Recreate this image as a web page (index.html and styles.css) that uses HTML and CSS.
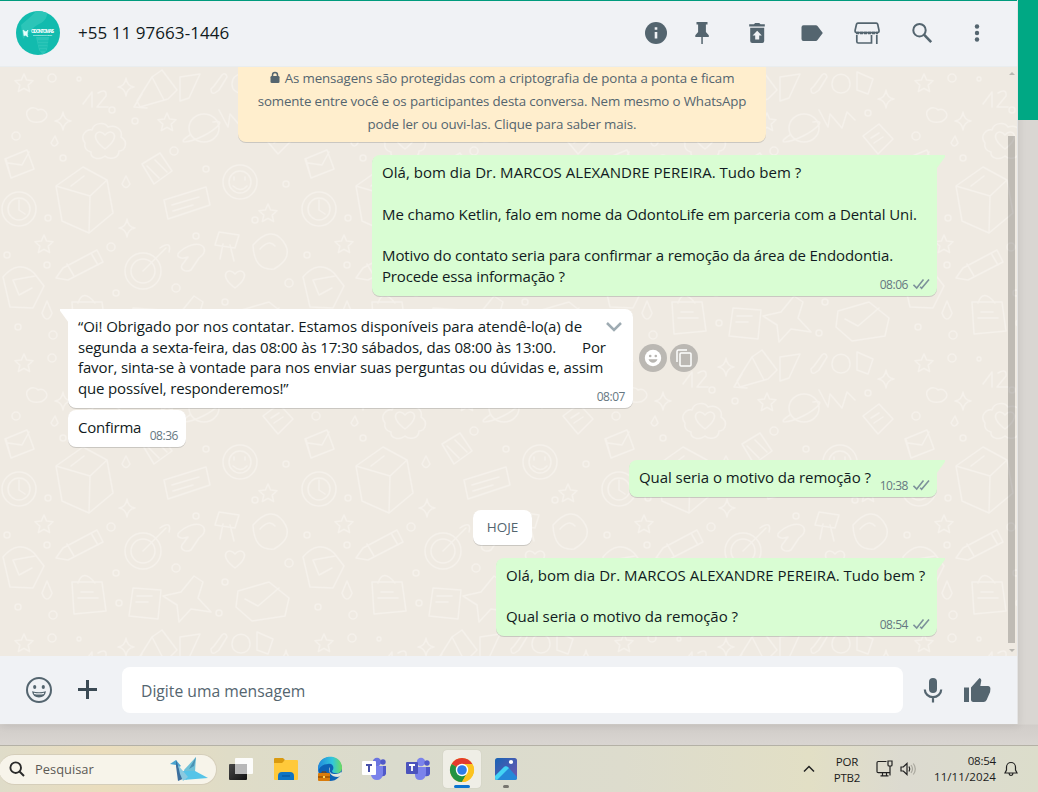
FILE: index.html
```html
<!DOCTYPE html>
<html lang="pt-BR">
<head>
	<meta charset="UTF-8">
	<title>WhatsApp</title>
	<link rel="stylesheet" href="styles.css">
</head>
<body>
	<div class="desktop">
		<div class="app">
			<div class="header">
				<svg class="avatar" width="44" height="44" viewBox="0 0 44 44">
					<defs><clipPath id="round"><circle cx="22" cy="22" r="22"/></clipPath></defs>
					<g clip-path="url(#round)">
						<rect width="44" height="44" fill="#12bbae"/>
						<path d="M5 14C12 8 17 4 20 0h11c1 5-2 11-8 13-6 3-10 9-16 15z" fill="#2cc5b8"/>
						<path d="M20 26h13l-2 13-4 5-4-5z" fill="#2cc5b8"/>
						<path d="M22 30h11M22 33h10M23 36h8M24 39h6" stroke="#12bbae"/>
					</g>
					<path d="M7 19l3 2 2-2-1 4 1 3-3-2-1 1zM10 20l2 4" fill="#e9fffc" stroke="#e9fffc" stroke-width=".5"/>
					<text class="logo-text" x="15" y="22.4" textLength="23">ODONTOMAIS</text>
					<text class="logo-sub" x="17" y="25.4" textLength="19">Excelência em Clínica</text>
				</svg>
				<div class="name">+55 11 97663-1446</div>
				<div class="tools">
					<svg class="info" width="24" height="24" viewBox="0 0 24 24"><circle cx="12" cy="12" r="11" fill="#54656f"/><path d="M12 11v6.500M12 6.200v2.600" stroke="#f0f2f5" stroke-width="2.600"/></svg>
					<svg width="24" height="24" viewBox="0 0 24 24" fill="#54656f"><path d="M6.500 1h11v2.600h-1.600V11l2.900 3.200V16h-6v7h-1.500v-7H5.300v-1.800L8.100 11V3.600H6.500z"/></svg>
					<svg width="24" height="24" viewBox="0 0 24 24" fill="#54656f"><path d="M4.200 3.300h4.600L10.200 2h4l1.400 1.300h4.200v2.200H4.200zM5.200 6.800h14V20a2 2 0 0 1-2 2h-10a2 2 0 0 1-2-2z"/><path d="M12.200 9.800l4.600 4.700h-2.600v4h-4v-4H7.600z" fill="#f0f2f5"/></svg>
					<svg width="24" height="24" viewBox="0 0 24 24"><path d="M3.500 4.200h12.300a2 2 0 0 1 1.700.8l5.300 7-5.300 7a2 2 0 0 1-1.700.9H3.500a2 2 0 0 1-2-2V6.200a2 2 0 0 1 2-2z" fill="#54656f"/></svg>
					<svg class="store" width="26" height="24" viewBox="0 0 26 24" fill="none" stroke="#54656f" stroke-width="1.700"><path d="M4 2.200h18.200a1.500 1.500 0 0 1 1.500 1.100L25 9.300v.9a1.500 1.500 0 0 1-1.500 1.500H2.600a1.500 1.500 0 0 1-1.500-1.500v-.9l1.400-6a1.500 1.500 0 0 1 1.500-1.100z"/><path d="M2 12h22" stroke-dasharray="3 1" stroke-width="2.500"/><path d="M2.800 14v6.500a1.500 1.500 0 0 0 1.500 1.500h13.200V14M22.800 14v9"/></svg>
					<svg width="24" height="24" viewBox="0 0 24 24" fill="none" stroke="#54656f"><circle cx="9.500" cy="9.200" r="6.200" stroke-width="2"/><path d="M14 13.700l7.200 7.500" stroke-width="2.600"/></svg>
					<svg width="24" height="24" viewBox="0 0 24 24" fill="#54656f"><circle cx="12" cy="5.500" r="2.200"/><circle cx="12" cy="12" r="2.200"/><circle cx="12" cy="18.500" r="2.200"/></svg>
				</div>
			</div>

			<div class="chat">
				<svg class="wallpaper" width="1017" height="589">
					<defs>
						<g id="star"><path d="M0-9l2.600 6 6.400.7-4.800 4.400 1.400 6.400L0 5.300l-5.600 3.200 1.400-6.400L-9-2.300l6.400-.7z"/></g>
						<g id="spark"><path d="M0-9Q1-1 8 0 1 1 0 9-1 1-8 0-1-1 0-9z"/></g>
						<g id="heart"><path d="M0 8C-18-5-6-14 0-6 6-14 18-5 0 8z"/></g>
						<pattern id="doodle" width="300" height="280" patternUnits="userSpaceOnUse">
							<g fill="none" stroke="#f5f1eb" stroke-width="1.500" stroke-linejoin="round" stroke-linecap="round">
								<use href="#star" x="24" y="16"/>
								<use href="#star" x="167" y="55"/>
								<use href="#star" x="44" y="177"/>
								<use href="#star" x="268" y="146"/>
								<use href="#spark" x="63" y="54"/>
								<use href="#spark" x="126" y="20"/>
								<use href="#spark" x="286" y="32"/>
								<use href="#spark" x="127" y="161"/>
								<use href="#heart" x="105" y="74"/>
								<use href="#heart" x="235" y="213"/>
								<path d="M85 76c-6-8 2-14 7-13 2-8 13-8 16-3 8-3 15 3 13 10 8 5 4 14-2 14 0 8-10 9-14 5-6 5-15 2-14-4-5-1-7-5-6-9z"/>
								<path d="M83 37l9-12v15M98 26q9-5 8 3l-9 11h11"/>
								<path d="M137 34l15-24 10-7 15 20-9 9-28 8zM152 10l12 23M142 27l-8 13 13 1"/>
								<ellipse cx="204" cy="61" rx="15" ry="14"/><path d="M190 68c-16 10-1 8 13 1s24-17 10-14"/>
								<path d="M180 10l20-3-11 24-9 3zM214 19l8-11q4-3 5 2l-8 13q-8 7-8-1z"/>
								<path d="M28 51c-5-9 6-13 10-8 6-3 12 5 7 9-4 5-15 4-17-1z"/>
								<path d="M5 92l22-9 7 19-23 9zM8 96l14 2 7-13M6 92l5 19"/>
								<path d="M142 97l18-11 12 18-18 13zM147 99l12 12M155 93l12 12"/>
								<path d="M56 119l27-19 24 13 6 33-24 20-27-12zM56 119l34 10 17-16M90 129l-1 37M71 119l13-10"/>
								<circle cx="19" cy="142" r="17"/><circle cx="19" cy="142" r="11"/><path d="M19 133v10l6 4"/>
								<path d="M164 133l42-13 4 18-42 14zM172 138l27-8M173 144l20-6"/>
								<circle cx="240" cy="115" r="17"/><circle cx="240" cy="115" r="11"/><path d="M234 110v3M245 110v3M233 119q8 7 14 0"/>
								<path d="M263 69l16-12 14 15-15 15zM271 71l8-5M274 76l9-6"/>
								<path d="M63 201l34-18 6 12-35 18-12-2zM67 197l7 12M91 186l7 12"/>
								<circle cx="143" cy="204" r="18"/><circle cx="143" cy="204" r="12"/><path d="M143 204l23-23M160 181q12-8 9 4"/>
								<path d="M182 183c18-13 30-1 17 8l-8 12c-6 3-11-1-9-5l6-8c-8 3-15-1-6-7z"/>
								<path d="M3 210q15-18 31-4l10 13-11 22-23-1zM13 213l6 15 13-7M13 213l22-4"/>
								<path d="M72 235h30l4 29-32 3zM78 236q5-15 17 0M78 251h20M81 245h12"/>
								<path d="M133 241l28 2-3 29-29-3zM137 249h15M136 255h12"/>
								<path d="M194 229l9 6-5 16 13 14-20-3-12 13-2-17-14-9 18-4z"/>
								<path d="M238 244l31-9 20 16-4 18-33 5-16-14zM245 252l13 7 21-18"/>
								<path d="M219 165l20 3-4 13-20-3zM223 177l-3 15M230 178l4 16"/>
								<path d="M253 178q18-20 30-4t-9 28q-20 2-21-24zM260 182q9-10 15-3"/>
								<path d="M219 43l9 17 2-13 12 14 5-16 8 8"/>
								<path d="M232 17c0-13 18-13 18 0 0 12-18 12-18 0zM257 5l16 7-5 15-11-4z"/>
								<path d="M42 246l5-12 5 12q-2 6-5 6t-5-6zM122 117l4-8 4 8q-4 7-8 0zM51 76l4-7 3 7q-4 6-7 0z"/>
								<circle cx="52" cy="11" r="4"/><circle cx="112" cy="43" r="3"/><circle cx="63" cy="91" r="3"/>
								<circle cx="16" cy="69" r="4"/><circle cx="135" cy="54" r="3"/><circle cx="174" cy="84" r="4"/>
								<circle cx="268" cy="46" r="3"/><circle cx="206" cy="102" r="3"/><circle cx="286" cy="117" r="3"/>
								<circle cx="48" cy="151" r="3"/><circle cx="111" cy="180" r="4"/><circle cx="196" cy="169" r="3"/>
								<circle cx="47" cy="198" r="3"/><circle cx="116" cy="226" r="3"/><circle cx="176" cy="221" r="4"/>
								<circle cx="53" cy="268" r="4"/><circle cx="119" cy="256" r="3"/><circle cx="225" cy="235" r="3"/>
								<circle cx="289" cy="216" r="4"/><circle cx="219" cy="266" r="3"/><circle cx="7" cy="188" r="3"/>
								<circle cx="18" cy="260" r="3"/><circle cx="255" cy="153" r="3"/><circle cx="79" cy="12" r="2"/>
							</g>
						</pattern>
						<g id="ticks"><path d="M.5 6.800l3.200 3.200L10.500 1.500M7.200 8.800l1.400 1.400L16 1.500" fill="none" stroke="#7d919a" stroke-width="1.600"/></g>
					</defs>
					<rect width="1017" height="589" fill="url(#doodle)"/>
				</svg>

				<div class="notice">
					<p class="n1"><svg width="10" height="13" viewBox="0 0 10 13"><path d="M2.500 6V4a2.500 2.500 0 0 1 5 0v2" fill="none" stroke="#54656f" stroke-width="1.500"/><rect x=".5" y="5" width="9" height="7" rx="1.300" fill="#54656f"/></svg><span>As mensagens são protegidas com a criptografia de ponta a ponta e ficam</span></p>
					<p class="n2">somente entre você e os participantes desta conversa. Nem mesmo o WhatsApp</p>
					<p class="n3">pode ler ou ouvi-las. Clique para saber mais.</p>
				</div>

				<div class="row out first">
					<div class="bubble sent tail w565">
						<div class="text">
							<p class="t1">Olá, bom dia Dr. MARCOS ALEXANDRE PEREIRA. Tudo bem ?</p>
							<p>&nbsp;</p>
							<p class="t2">Me chamo Ketlin, falo em nome da OdontoLife em parceria com a Dental Uni.</p>
							<p>&nbsp;</p>
							<p class="t3">Motivo do contato seria para confirmar a remoção da área de Endodontia.</p>
							<p class="t4">Procede essa informação ?</p>
						</div>
						<div class="meta">08:06 <svg width="17" height="12"><use href="#ticks"/></svg></div>
					</div>
				</div>

				<div class="row in second">
					<div class="bubble tail w565">
						<div class="text">
							<p class="t5">“Oi! Obrigado por nos contatar. Estamos disponíveis para atendê-lo(a) de</p>
							<p class="t6">segunda a sexta-feira, das 08:00 às 17:30 sábados, das 08:00 às 13:00.<span class="por">Por</span></p>
							<p class="t7">favor, sinta-se à vontade para nos enviar suas perguntas ou dúvidas e, assim</p>
							<p class="t8">que possível, responderemos!”</p>
						</div>
						<svg class="arrow" width="18" height="12" viewBox="0 0 18 12"><path d="M2 2l7 7 7-7" fill="none" stroke="#9eabb2" stroke-width="2.500"/></svg>
						<div class="meta">08:07</div>
					</div>
					<div class="round">
						<svg width="20" height="20" viewBox="0 0 20 20"><circle cx="10" cy="10" r="8.200" fill="#fff"/><circle cx="7.200" cy="8" r="1.300" fill="#b7b5b1"/><circle cx="12.800" cy="8" r="1.300" fill="#b7b5b1"/><path d="M5.500 11.300h9q-1.300 3.400-4.500 3.400t-4.500-3.400z" fill="#b7b5b1"/></svg>
					</div>
					<div class="round">
						<svg width="20" height="20" viewBox="0 0 20 20" fill="none" stroke="#fff" stroke-width="1.500"><path d="M3 14V3.500A1.500 1.500 0 0 1 4.500 2H13"/><rect x="6" y="5" width="11" height="13" rx="1"/></svg>
					</div>
				</div>

				<div class="row in third">
					<div class="bubble w118">
						<div class="text"><p class="t9">Confirma</p></div>
						<div class="meta">08:36</div>
					</div>
				</div>

				<div class="row out fourth">
					<div class="bubble sent tail w308">
						<div class="text"><p class="t10">Qual seria o motivo da remoção ?</p></div>
						<div class="meta">10:38 <svg width="17" height="12"><use href="#ticks"/></svg></div>
					</div>
				</div>

				<div class="day">HOJE</div>

				<div class="row out last">
					<div class="bubble sent tail w441">
						<div class="text">
							<p class="t1">Olá, bom dia Dr. MARCOS ALEXANDRE PEREIRA. Tudo bem ?</p>
							<p>&nbsp;</p>
							<p class="t10">Qual seria o motivo da remoção ?</p>
						</div>
						<div class="meta">08:54 <svg width="17" height="12"><use href="#ticks"/></svg></div>
					</div>
				</div>

				<div class="scroll">
					<span class="up"></span>
					<span class="thumb"></span>
					<span class="down"></span>
				</div>
			</div>

			<div class="footer">
				<svg class="smile" width="28" height="28" viewBox="0 0 28 28"><circle cx="14" cy="14" r="12" fill="none" stroke="#54656f" stroke-width="2"/><ellipse cx="9.700" cy="11" rx="1.600" ry="2" fill="#54656f"/><ellipse cx="18.300" cy="11" rx="1.600" ry="2" fill="#54656f"/><path d="M7 15.300q7 2 14 0-1 6.200-7 6.200t-7-6.200z" fill="#54656f"/><path d="M9 17.300q5 1.200 10 0" stroke="#f0f2f5" stroke-width="1.300" fill="none"/></svg>
				<svg class="plus" width="20" height="20" viewBox="0 0 20 20"><path d="M9.500 0v19M0 9.500h19" stroke="#3b4a54" stroke-width="3"/></svg>
				<div class="input"><span>Digite uma mensagem</span></div>
				<svg class="mic" width="20" height="26" viewBox="0 0 20 26"><rect x="6" y="1" width="8" height="15" rx="4" fill="#54656f"/><path d="M1.800 12.500a8.200 7.600 0 0 0 16.400 0M10 20v5.500" fill="none" stroke="#54656f" stroke-width="2.200"/></svg>
				<svg class="thumbup" width="28" height="26" viewBox="0 0 28 26" fill="#54656f"><path d="M1 10.500h5V25H1zM8 10.500L16.500 1q2 .8 1.800 2.500L17.300 9H25q2.500.3 2.400 3l-.3 3-3.500 8q-1 2-3 2H10q-2-.3-2-2z"/></svg>
			</div>
		</div>
		<div class="side"></div>
	</div>

	<div class="taskbar">
		<div class="search">
			<svg width="16" height="16" viewBox="0 0 16 16" fill="none" stroke="#2a2a2a" stroke-width="1.900"><circle cx="6.700" cy="6.700" r="5.300"/><path d="M10.500 10.500l4.500 4.500"/></svg>
			<span>Pesquisar</span>
			<svg class="bird" width="40" height="26" viewBox="0 0 40 26"><path d="M1 8l6-4 5 6-4 2-1-3z" fill="#4aa4cf"/><path d="M7 4l3 8 6 10-7 3-2-15z" fill="#3c6f9e"/><path d="M15 14L27 1l-1 15-9 8z" fill="#6fc1d8"/><path d="M20 13l5-3 2-9z" fill="#4b91b3"/><path d="M14 15l12 0 13 7-25 2z" fill="#56c4e8"/><path d="M9 9l10 12-5 4-3-7z" fill="#8ac9e0"/></svg>
		</div>
		<div class="icons">
			<svg width="26" height="26" viewBox="0 0 26 26"><defs><linearGradient id="gd" x2="1" y2="1"><stop stop-color="#484848"/><stop offset="1" stop-color="#111"/></linearGradient></defs><rect x="0" y="8" width="18" height="16" rx="1" fill="url(#gd)"/><rect x="6" y="2" width="18" height="16" rx="1" fill="#fff" opacity=".9"/><rect x="6" y="8" width="12" height="10" fill="#b8b8b8"/></svg>
			<svg width="26" height="26" viewBox="0 0 26 26"><path d="M1 3q0-1 1-1h8l2 2-2 4H1z" fill="#d99a10"/><path d="M1 7h8l3-3h12q1 0 1 1v18q0 1-1 1H2q-1 0-1-1z" fill="#ffc93a"/><path d="M5 24v-4q0-4 4-4h8q4 0 4 4v4z" fill="#0f74c4"/><path d="M9 20h8" stroke="#064f95"/></svg>
			<svg width="26" height="26" viewBox="0 0 26 26"><defs><linearGradient id="ed"><stop stop-color="#2088dc"/><stop offset=".6" stop-color="#31c6dc"/><stop offset="1" stop-color="#6edc5c"/></linearGradient></defs><circle cx="13" cy="13" r="12" fill="#0d62b6"/><path d="M1 13C1-3 25-3 25 12c0 7-10 6-10 3 3-3 1-8-4-7-5 0-9 3-10 8z" fill="url(#ed)"/><path d="M13 11q-2 7 4 7 5 0 7-2l1 1q-1 3-4 4-6 0-8-4-2-4 0-6z" fill="#e3e5da"/><rect x="1" y="17" width="12" height="8" rx="1" fill="#d97c0b"/><path d="M1 21h12M5 17v-1h4v1" stroke="#7d3c00" fill="none"/><path d="M6 20h2v2H6z" fill="#ffd451"/></svg>
			<svg width="26" height="26" viewBox="0 0 26 26"><circle cx="16" cy="6" r="4.200" fill="#6a74df"/><circle cx="22" cy="6" r="2.700" fill="#5059c9"/><path d="M18 10h7v8q-1 3-5 2z" fill="#5059c9"/><path d="M10 10h12v8q-1 6-6 6t-6-5z" fill="#7b83eb"/><rect x="1" y="5" width="14" height="14" rx="1" fill="#fff"/><path d="M5 9h6M8 9v7" stroke="#4650aa" stroke-width="2"/></svg>
			<svg width="26" height="26" viewBox="0 0 26 26"><circle cx="16" cy="6" r="4.200" fill="#7b83eb"/><circle cx="22" cy="7" r="2.700" fill="#5059c9"/><path d="M18 11h7v7q-1 3-5 2z" fill="#5059c9"/><path d="M10 11h11v7q-1 6-6 6t-5-5z" fill="#7b83eb"/><rect x="1" y="6" width="12" height="12" rx="1" fill="#4b53bc"/><path d="M4 9h6M7 9v6" stroke="#fff" stroke-width="1.800"/></svg>
			<div class="active">
				<svg width="26" height="26" viewBox="0 0 26 26"><circle cx="13" cy="13" r="12" fill="#fcc31e"/><path d="M13 13L2.600 7A12 12 0 0 1 23.400 7z" fill="#e33b2e"/><path d="M13 13L2.600 7A12 12 0 0 0 13 25l5-9z" fill="#229342"/><path d="M13 7h10.400a12 12 0 0 1-10.400 18l5.200-9z" fill="#fcc31e"/><circle cx="13" cy="13" r="6.200" fill="#fff"/><circle cx="13" cy="13" r="4.800" fill="#2f7de8"/></svg>
				<i></i>
			</div>
			<div class="photos">
				<svg width="24" height="24" viewBox="0 0 24 24"><defs><linearGradient id="ph" y2="1"><stop stop-color="#1763b4"/><stop offset="1" stop-color="#7257b0"/></linearGradient></defs><rect x="1" y="1" width="22" height="22" rx="2.500" fill="url(#ph)"/><path d="M1 19L10 10q2-2 4 0l9 10v1q0 2-2 2H3q-2 0-2-2z" fill="#2588d8"/><path d="M1 19L10 10q2-2 5 1L3 23q-2 0-2-2z" fill="#43d3f4"/><circle cx="17" cy="5" r="2.100" fill="#fff"/></svg>
				<i></i>
			</div>
		</div>
		<div class="tray">
			<svg width="12" height="8" viewBox="0 0 12 8"><path d="M1 6.500l5-5 5 5" fill="none" stroke="#222" stroke-width="1.500"/></svg>
			<div class="lang"><span>POR</span><br>PTB2</div>
			<svg class="net" width="17" height="17" viewBox="0 0 17 17" fill="none" stroke="#222" stroke-width="1.200"><path d="M10.500 1.500H2.200Q1 1.500 1 2.700v8.800q0 1.200 1.200 1.200h12M4.500 15.800h8M6.500 13v2.500M10.500 13v2.500M12 1h4v4q0 1-1 1h-2q-1 0-1-1zM14 6v9.500"/></svg>
			<svg class="sound" width="17" height="14" viewBox="0 0 17 14" fill="none" stroke="#222" stroke-width="1.200"><path d="M1 5h2.300L7 1.500v11L3.300 9H1z"/><path d="M9 4.500q1.500 2.500 0 5"/><path d="M11 3q3 4 0 8M13.300 1.500q4 5.500 0 11" stroke="#aaa89e"/></svg>
			<div class="clock"><span class="hour">08:54</span><br><span class="date">11/11/2024</span></div>
			<svg class="bell" width="14" height="16" viewBox="0 0 14 16" fill="none" stroke="#222" stroke-width="1.200"><path d="M1 12h12l-1.500-3V6a4.500 4.500 0 0 0-9 0v3zM5 12.500q.5 2 2 2t2-2"/></svg>
		</div>
	</div>
</body>
</html>
```
FILE: styles.css
```css
*{
	box-sizing: border-box;
}
body{
	margin: 0;
	width: 1038px;
	height: 792px;
	overflow: hidden;
	font-family: "Open Sans", "Noto Sans", sans-serif;
	background: #d9d5d1;
}
p{
	margin: 0;
	white-space: nowrap;
}
svg{
	display: block;
	flex: none;
}
.desktop{
	display: flex;
	height: 745px;
	background: linear-gradient(#d9d6d2 0 724px, #d1cdc9 725px, #d9d5d1 745px);
}
.app{
	width: 1017px;
	height: 724px;
	display: flex;
	flex-direction: column;
	box-shadow: 1px 0 0 #e4e4e4, 2px 2px 8px rgba(0,0,0,.08);
}
.side{
	width: 20px;
	height: 120px;
	margin-left: 1px;
	background: #00a884;
}

/* header */
.header{
	height: 67px;
	padding: 0 28px 2px 16px;
	display: flex;
	align-items: center;
	background: #f0f2f5;
	border-top: 1px solid #009b7d;
	border-bottom: 1px solid #e9edef;
}
.logo-text{
	font-size: 4.5px;
	font-weight: bold;
	fill: #fff;
}
.logo-sub{
	font-size: 2.5px;
	fill: #fff;
}
.name{
	margin-left: 18px;
	font-size: 17px;
	color: #111b21;
	white-space: nowrap;
	letter-spacing: .05px;
}
.tools{
	margin-left: auto;
	display: flex;
	gap: 31px;
}
.info{
	margin-right: -9px;
}
.store{
	margin: 0 -1px;
}

/* chat */
.chat{
	position: relative;
	height: 589px;
	padding: 0 80px 20px 68px;
	display: flex;
	flex-direction: column;
	justify-content: flex-end;
	overflow: hidden;
	background: #efeae2;
}
.wallpaper{
	position: absolute;
	top: 0;
	left: 0;
}
.notice{
	position: relative;
	width: 528px;
	flex: none;
	margin-left: 170px;
	padding: 8px 20px 6px;
	font-size: 13.3px;
	line-height: 23px;
	color: #54656f;
	background: #ffeecd;
	border-radius: 8px;
	box-shadow: 0 1px .5px rgba(11,20,26,.16);
}
.notice p{
	display: flex;
	justify-content: center;
}
.notice svg{
	margin: 4px 5px 0 0;
}
.n1{
	letter-spacing: -.11px;
}
.n2{
	letter-spacing: -.13px;
}
.n3{
	letter-spacing: -.12px;
}
.row{
	position: relative;
	display: flex;
	flex: none;
}
.out{
	justify-content: flex-end;
}
.first, .second, .fourth, .last{
	margin-top: 13px;
}
.second{
	align-items: center;
}
.third{
	margin-top: 2px;
}
.bubble{
	position: relative;
	display: grid;
	padding: 7px 7px 9px 10px;
	font-size: 15px;
	line-height: 20.8px;
	color: #111b21;
	background: #fff;
	border-radius: 8px;
	box-shadow: 0 1px .5px rgba(11,20,26,.16);
}
.sent{
	background: #d9fdd3;
}
.w565{
	width: 565px;
}
.w118{
	width: 118px;
}
.w308{
	width: 308px;
}
.w441{
	width: 441px;
}
.tail:before{
	content: "";
	position: absolute;
	top: 0;
	left: -8px;
	width: 16px;
	height: 13px;
	background: #fff;
	clip-path: polygon(0 0, 100% 0, 100% 100%, 8px 100%, 0 2px);
}
.sent.tail:before{
	left: auto;
	right: -8px;
	background: #d9fdd3;
	clip-path: polygon(0 0, 100% 0, 100% 2px, 8px 100%, 0 100%);
}
.text, .meta, .arrow{
	grid-area: 1 / 1;
	position: relative;
}
.meta{
	align-self: end;
	justify-self: end;
	display: flex;
	gap: 5px;
	margin-bottom: -6px;
	font-size: 12px;
	line-height: 16px;
	letter-spacing: -.45px;
	color: #667781;
}
.in .meta{
	margin-right: 1px;
}
.meta svg{
	margin-top: 1px;
}
/* each line keeps its own tracking */
.t1{
	letter-spacing: .03px;
}
.t2{
	letter-spacing: -.085px;
}
.t3{
	letter-spacing: -.105px;
}
.t4{
	letter-spacing: -.15px;
}
.t5{
	letter-spacing: -.06px;
}
.t6{
	letter-spacing: -.14px;
}
.t7{
	letter-spacing: -.13px;
}
.t8{
	letter-spacing: -.16px;
}
.t9{
	letter-spacing: -.2px;
}
.t10{
	letter-spacing: -.06px;
}
.arrow{
	justify-self: end;
	margin: 5px 3px 0 0;
}
.por{
	margin-left: 26px;
}
.round{
	width: 28px;
	height: 28px;
	margin-left: 6px;
	display: flex;
	align-items: center;
	justify-content: center;
	border-radius: 50%;
	background: #bbb8b3;
}
.round + .round{
	margin-left: 3px;
}
.day{
	position: relative;
	flex: none;
	width: 59px;
	height: 35px;
	margin: 13px 0 0 405px;
	font-size: 13.5px;
	line-height: 35px;
	letter-spacing: 0;
	text-align: center;
	color: #54656f;
	background: #fff;
	border-radius: 8px;
	box-shadow: 0 1px .5px rgba(11,20,26,.16);
}
.scroll{
	position: absolute;
	top: 4px;
	right: 2px;
	width: 7px;
	height: 583px;
	display: flex;
	flex-direction: column;
	align-items: center;
}
.thumb{
	width: 7px;
	height: 507px;
	margin: 61px 0 5px;
	background: rgba(0,0,0,.2);
}
.up, .down{
	border: 3px solid transparent;
	border-top: 0;
	border-bottom-color: #b9b7b1;
	margin-top: 1px;
}
.down{
	border-top: 3px solid #b9b7b1;
	border-bottom: 0;
}

/* footer */
.footer{
	height: 68px;
	display: flex;
	align-items: center;
	background: #f0f2f5;
}
.smile{
	margin-left: 25px;
}
.plus{
	margin-left: 25px;
}
.input{
	width: 781px;
	height: 46px;
	margin-left: 24px;
	padding-left: 19px;
	font-size: 15.7px;
	line-height: 48px;
	color: #54656f;
	background: #fff;
	border-radius: 8px;
}
.mic{
	margin-left: 20px;
}
.thumbup{
	margin-left: 20px;
}

/* taskbar */
.taskbar{
	height: 47px;
	display: flex;
	border-top: 1px solid #b4b1a6;
	background: linear-gradient(90deg, #dfdcc9, #eaddbd 10%, #dfdcc7 22%, #dadbcd 38%, #dddccd 60%, #e2dfc5 78%, #dcdad0 87%, #dcddcb 100%);
}
.search{
	width: 218px;
	height: 31px;
	margin: 8px 0 0 -1px;
	padding: 0 7px 1px 10px;
	display: flex;
	align-items: center;
	font-size: 12.9px;
	color: #5c5a55;
	background: #f7f4ea;
	border: 1px solid #d5ceba;
	border-left: 0;
	border-radius: 16px;
}
.search span{
	margin-left: 10px;
}
.bird{
	margin-left: auto;
}
.icons{
	display: flex;
	margin-left: 12px;
	padding-top: 10px;
	gap: 18px;
}
.active{
	width: 38px;
	height: 38px;
	margin: -6px -6px 0;
	padding: 7px 6px 0;
	border-radius: 4px;
	background: #efeee6;
	box-shadow: 0 0 1px #bbb9ae;
}
.active i{
	display: block;
	width: 16px;
	height: 3px;
	margin: 2px auto 0;
	border-radius: 2px;
	background: #0a74d0;
}
.photos{
	margin: 1px 0 0 1px;
}
.photos i{
	display: block;
	width: 6px;
	height: 3px;
	margin: 4px auto 0;
	border-radius: 2px;
	background: #77756f;
}
.tray{
	margin-left: auto;
	padding-right: 20px;
	display: flex;
	font-size: 11.5px;
	line-height: 16px;
	letter-spacing: -.2px;
	color: #1b1b1b;
}
.tray > svg:first-child{
	margin-top: 19px;
}
.lang{
	width: 30px;
	margin: 8px 0 0 17px;
	text-align: center;
	white-space: nowrap;
}
.net{
	margin: 14px 0 0 14px;
}
.sound{
	margin: 16px 0 0 7px;
}
.clock{
	width: 66px;
	margin: 7px 0 0 13px;
	text-align: right;
	white-space: nowrap;
}
.date{
	letter-spacing: .1px;
}
.bell{
	margin: 15px 0 0 8px;
}
```
